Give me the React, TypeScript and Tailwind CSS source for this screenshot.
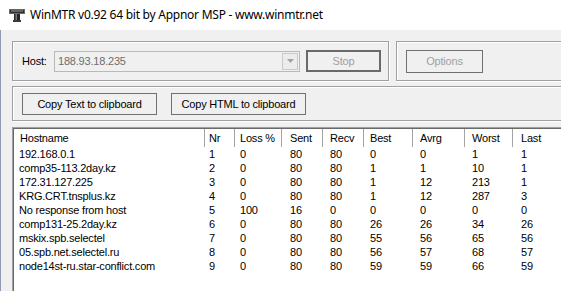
import React from 'react'

const FONT = "font-['Liberation_Sans',Arial,sans-serif] text-[11px] tracking-[-0.2px] leading-none"

const COLUMNS = [
  { label: 'Hostname', head: 'w-[191px] pl-[6px]', cell: 'w-[191px] pl-[5px]' },
  { label: 'Nr', head: 'w-[30px] pl-[4px]', cell: 'w-[30px] pl-[4px]' },
  { label: 'Loss %', head: 'w-[47px] pl-[5px]', cell: 'w-[47px] pl-[5px]' },
  { label: 'Sent', head: 'w-[41px] pl-[8px]', cell: 'w-[41px] pl-[8px]' },
  { label: 'Recv', head: 'w-[41px] pl-[7px]', cell: 'w-[41px] pl-[7px]' },
  { label: 'Best', head: 'w-[49px] pl-[6px]', cell: 'w-[49px] pl-[6px]' },
  { label: 'Avrg', head: 'w-[52px] pl-[7px]', cell: 'w-[52px] pl-[7px]' },
  { label: 'Worst', head: 'w-[48px] pl-[7px]', cell: 'w-[48px] pl-[7px]' },
  { label: 'Last', head: 'w-[60px] pl-[8px]', cell: 'w-[60px] pl-[8px]' },
]

const ROWS: (string | number)[][] = [
  ['192.168.0.1', 1, 0, 80, 80, 0, 0, 1, 1],
  ['comp35-113.2day.kz', 2, 0, 80, 80, 1, 1, 10, 1],
  ['172.31.127.225', 3, 0, 80, 80, 1, 12, 213, 1],
  ['KRG.CRT.tnsplus.kz', 4, 0, 80, 80, 1, 12, 287, 3],
  ['No response from host', 5, 100, 16, 0, 0, 0, 0, 0],
  ['comp131-25.2day.kz', 6, 0, 80, 80, 26, 26, 34, 26],
  ['mskix.spb.selectel', 7, 0, 80, 80, 55, 56, 65, 56],
  ['05.spb.net.selectel.ru', 8, 0, 80, 80, 56, 57, 68, 57],
  ['node14st-ru.star-conflict.com', 9, 0, 80, 80, 59, 59, 66, 59],
]

function AppIcon() {
  return (
    <svg width="16" height="13" viewBox="0 0 16 13">
      <rect x="0.5" y="0.5" width="15" height="4" fill="#2f2f2f" stroke="#6a6a6a" />
      <rect x="2" y="1.5" width="12" height="1" fill="#9a9a9a" />
      <rect x="5" y="5" width="6" height="6" fill="#262626" />
      <rect x="6.5" y="5" width="1.5" height="6" fill="#7c7c7c" />
      <rect x="4" y="11" width="8" height="2" fill="#3a3a3a" />
    </svg>
  )
}

// classic etched group frame
const GROUP = 'shrink-0 border border-[#a0a0a0] shadow-[inset_1px_1px_0_#ffffff,1px_1px_0_#ffffff]'

function Button({ children, disabled, wide, className }: { children: React.ReactNode; disabled?: boolean; wide?: boolean; className?: string }) {
  return (
    <div
      className={`${className ?? ''} shrink-0 flex items-center justify-center bg-[#f0f0f0] ${
        wide ? 'border-2 border-[#6a6a6a]' : 'border border-[#707070]'
      } ${disabled ? 'text-[#a0a0a0]' : 'text-black'}`}
    >
      {children}
    </div>
  )
}

export default function App() {
  return (
    <div className={`w-[561px] h-[291px] overflow-hidden bg-white flex flex-col ${FONT}`}>
      {/* Title bar */}
      <div className="h-[30px] shrink-0 flex items-center pl-[9px] gap-[5px] bg-white">
        <AppIcon />
        <span className="font-['Noto_Sans',sans-serif] text-[12px] tracking-[-0.25px] text-black pb-[1px]">
          WinMTR v0.92 64 bit by Appnor MSP - www.winmtr.net
        </span>
      </div>

      {/* Client area */}
      <div className="flex-1 min-h-0 bg-[#f0f0f0] border-l border-[#8d9cb2] pl-[11px] pt-[11px] flex flex-col">
        <div className="flex gap-[7px] h-[40px] shrink-0">
          <div className={`${GROUP} w-[377px] flex items-center pl-[9px]`}>
            <span className="w-[32px] text-black">Host:</span>
            <div className="w-[246px] h-[21px] shrink-0 border border-[#b9b9b9] bg-[#f0f0f0] flex items-center justify-between pl-[3px] pr-[1px]">
              <span className="text-[#6d6d6d]">188.93.18.235</span>
              <div className="w-[16px] h-[17px] border border-[#c9c9c9] bg-[#ececec] flex items-center justify-center">
                <svg width="7" height="4" viewBox="0 0 7 4">
                  <path d="M0 0h7L3.5 4z" fill="#a3a3a3" />
                </svg>
              </div>
            </div>
            <Button disabled wide className="ml-[6px] w-[75px] h-[22px]">Stop</Button>
          </div>
          <div className={`${GROUP} w-[200px] flex items-center pl-[9px]`}>
            <Button disabled className="w-[77px] h-[23px] border-[#8a8a8a]">Options</Button>
          </div>
        </div>

        <div className={`${GROUP} mt-[5px] h-[35px] w-[580px] flex items-center pl-[9px] gap-[14px]`}>
          <Button className="w-[135px] h-[22px] mt-[1px]">Copy Text to clipboard</Button>
          <Button className="w-[135px] h-[22px] mt-[1px]">Copy HTML to clipboard</Button>
        </div>

        {/* Trace list */}
        <div className="mt-[6px] flex-1 w-[580px] shrink-0 bg-white border-l border-t border-[#a0a0a0] shadow-[inset_1px_1px_0_#696969] pl-[1px] pt-[1px]">
          <div className="flex h-[18px] text-black">
            {COLUMNS.map((c, i) => (
              <div
                key={c.label}
                className={`${c.head} shrink-0 h-full flex items-center ${i < COLUMNS.length - 1 ? 'border-r border-[#a5a5a5]' : ''}`}
              >
                {c.label}
              </div>
            ))}
          </div>
          {ROWS.map(row => (
            <div key={row[0] as string} className="flex h-[14px] items-center text-black">
              {row.map((v, i) => (
                <div key={i} className={`${COLUMNS[i].cell} shrink-0 whitespace-nowrap`}>
                  {v}
                </div>
              ))}
            </div>
          ))}
        </div>
      </div>
    </div>
  )
}
